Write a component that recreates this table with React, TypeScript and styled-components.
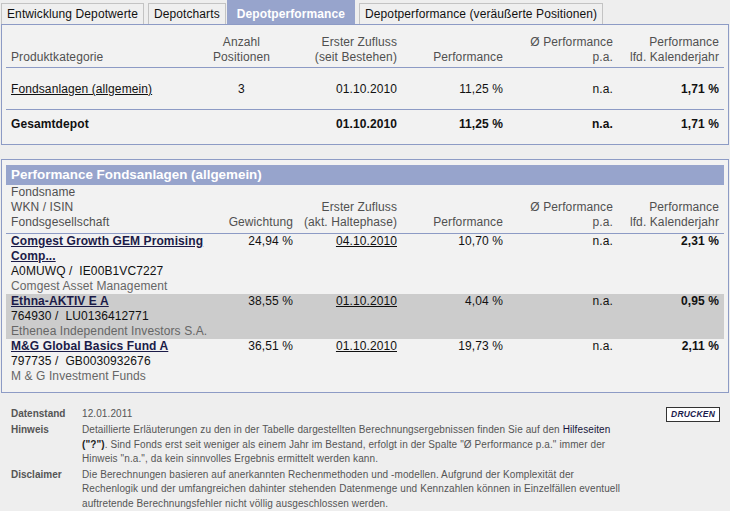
import React from 'react';
import styled, { createGlobalStyle } from 'styled-components';

const GlobalStyle = createGlobalStyle`
  html, body { margin: 0; padding: 0; background: #eeeeee; }
  body {
    font-family: "Liberation Sans", Arial, sans-serif;
    font-size: 12px;
    color: #111111;
  }
`;

const Page = styled.div`
  width: 730px;
  box-sizing: border-box;
  padding: 0 1px;
`;

const TabBar = styled.nav`
  display: flex;
  align-items: flex-end;
  height: 24px;
  gap: 4px;
`;

const Tab = styled.div<{ $active?: boolean }>`
  box-sizing: border-box;
  height: ${p => (p.$active ? 24 : 21)}px;
  padding: ${p => (p.$active ? '6px 9px 0' : '3px 5px 0')};
  margin-left: ${p => (p.$active ? '-3px' : '0')};
  border: 1px solid ${p => (p.$active ? '#97a4cc' : '#c3c3c3')};
  border-bottom: none;
  background: ${p => (p.$active ? '#97a4cc' : '#efefef')};
  color: ${p => (p.$active ? '#ffffff' : '#111111')};
  font-weight: ${p => (p.$active ? 'bold' : 'normal')};
  line-height: 15px;
  white-space: nowrap;
  letter-spacing: 0.1px;
`;

const Panel = styled.section`
  border: 1px solid #8d9bc5;
  background: #f2f2f2;
  padding: 0 4px;
`;

const SummaryPanel = styled(Panel)`
  padding-top: 10px;
  padding-bottom: 5px;
`;

const DetailPanel = styled(Panel)`
  margin-top: 14px;
  padding-top: 5px;
  padding-bottom: 8px;
`;

const TitleBar = styled.h2`
  margin: 0;
  height: 20px;
  line-height: 20px;
  padding: 0 5px;
  background: #97a4cc;
  color: #ffffff;
  font-size: 13.4px;
  font-weight: bold;
`;

const Row = styled.div<{ $cols: string; $pt?: number; $pb?: number; $line?: boolean; $shade?: boolean }>`
  display: grid;
  grid-template-columns: ${p => p.$cols};
  align-items: start;
  line-height: 15px;
  padding-top: ${p => p.$pt ?? 0}px;
  padding-bottom: ${p => p.$pb ?? 0}px;
  border-bottom: ${p => (p.$line ? '1px solid #8d9bc5' : 'none')};
  background: ${p => (p.$shade ? '#cccccc' : 'transparent')};
  letter-spacing: 0.1px;
`;

const HeadRow = styled(Row)`
  align-items: end;
  color: #505050;
`;

const Cell = styled.div<{ $align?: 'left' | 'center' | 'right'; $bold?: boolean }>`
  padding: 0 5px;
  text-align: ${p => p.$align ?? 'left'};
  font-weight: ${p => (p.$bold ? 'bold' : 'normal')};
  white-space: nowrap;
`;

const PlainLink = styled.a`
  color: #111111;
  text-decoration: underline;
`;

const FundLink = styled.a`
  color: #1b1b48;
  font-weight: bold;
  text-decoration: underline;
`;

const Ids = styled.div`
  color: #111111;
`;

const Company = styled.div`
  color: #666666;
`;

const InfoGrid = styled.div`
  display: grid;
  grid-template-columns: 71px 1fr 52px;
  row-gap: 1px;
  margin-top: 14px;
  padding: 0 9px 0 10px;
  font-size: 10px;
  line-height: 14.5px;
  color: #555555;
  letter-spacing: 0.1px;
`;

const InfoLabel = styled.div`
  font-size: 10px;
  font-weight: bold;
  letter-spacing: 0;
`;

const InfoText = styled.div<{ $span?: boolean }>`
  grid-column: ${p => (p.$span ? '2 / 4' : 'auto')};
`;

const HelpLink = styled.a`
  color: #15153a;
  font-weight: normal;
  text-decoration: none;
`;

const Strong = styled.b`
  color: #222222;
`;

const PrintButton = styled.button`
  justify-self: end;
  box-sizing: border-box;
  height: 15px;
  padding: 0 4px;
  border: 1px solid #333333;
  background: #ffffff;
  color: #1b1b4d;
  font-family: "Liberation Sans", Arial, sans-serif;
  font-size: 8.5px;
  font-weight: bold;
  font-style: italic;
  line-height: 13px;
  letter-spacing: 0.2px;
  cursor: pointer;
`;

const SUM_COLS = '200px 71px 125px 106px 110px 106px';
const DET_COLS = '214px 78px 104px 106px 110px 106px';

type Fund = {
  name: React.ReactNode;
  ids: string;
  company: string;
  weight: string;
  date: string;
  perf: string;
  pa: string;
  ytd: string;
  shade?: boolean;
};

const funds: Fund[] = [
  {
    name: (
      <>
        Comgest Growth GEM Promising
        <br />
        Comp...
      </>
    ),
    ids: 'A0MUWQ /\u00a0 IE00B1VC7227',
    company: 'Comgest Asset Management',
    weight: '24,94 %',
    date: '04.10.2010',
    perf: '10,70 %',
    pa: 'n.a.',
    ytd: '2,31 %',
  },
  {
    name: 'Ethna-AKTIV E A',
    ids: '764930 /\u00a0 LU0136412771',
    company: 'Ethenea Independent Investors S.A.',
    weight: '38,55 %',
    date: '01.10.2010',
    perf: '4,04 %',
    pa: 'n.a.',
    ytd: '0,95 %',
    shade: true,
  },
  {
    name: 'M&G Global Basics Fund A',
    ids: '797735 /\u00a0 GB0030932676',
    company: 'M & G Investment Funds',
    weight: '36,51 %',
    date: '01.10.2010',
    perf: '19,73 %',
    pa: 'n.a.',
    ytd: '2,11 %',
  },
];

export default function App() {
  return (
    <Page>
      <GlobalStyle />
      <TabBar>
        <Tab>Entwicklung Depotwerte</Tab>
        <Tab>Depotcharts</Tab>
        <Tab $active>Depotperformance</Tab>
        <Tab>Depotperformance (veräußerte Positionen)</Tab>
      </TabBar>

      <SummaryPanel>
        <HeadRow $cols={SUM_COLS} $pb={2} $line>
          <Cell>Produktkategorie</Cell>
          <Cell $align="center">
            Anzahl
            <br />
            Positionen
          </Cell>
          <Cell $align="right">
            Erster Zufluss
            <br />
            (seit Bestehen)
          </Cell>
          <Cell $align="right">Performance</Cell>
          <Cell $align="right">
            Ø Performance
            <br />
            p.a.
          </Cell>
          <Cell $align="right">
            Performance
            <br />
            lfd. Kalenderjahr
          </Cell>
        </HeadRow>
        <Row $cols={SUM_COLS} $pt={14} $pb={12} $line>
          <Cell>
            <PlainLink href="#">Fondsanlagen (allgemein)</PlainLink>
          </Cell>
          <Cell $align="center">3</Cell>
          <Cell $align="right">01.10.2010</Cell>
          <Cell $align="right">11,25 %</Cell>
          <Cell $align="right">n.a.</Cell>
          <Cell $align="right" $bold>
            1,71 %
          </Cell>
        </Row>
        <Row $cols={SUM_COLS} $pt={7} $pb={7}>
          <Cell $bold>Gesamtdepot</Cell>
          <Cell $align="center" />
          <Cell $align="right" $bold>
            01.10.2010
          </Cell>
          <Cell $align="right" $bold>
            11,25 %
          </Cell>
          <Cell $align="right" $bold>
            n.a.
          </Cell>
          <Cell $align="right" $bold>
            1,71 %
          </Cell>
        </Row>
      </SummaryPanel>

      <DetailPanel>
        <TitleBar>Performance Fondsanlagen (allgemein)</TitleBar>
        <HeadRow $cols={DET_COLS} $pb={3} $line>
          <Cell>
            Fondsname
            <br />
            WKN / ISIN
            <br />
            Fondsgesellschaft
          </Cell>
          <Cell $align="right">Gewichtung</Cell>
          <Cell $align="right">
            Erster Zufluss
            <br />
            (akt. Haltephase)
          </Cell>
          <Cell $align="right">Performance</Cell>
          <Cell $align="right">
            Ø Performance
            <br />
            p.a.
          </Cell>
          <Cell $align="right">
            Performance
            <br />
            lfd. Kalenderjahr
          </Cell>
        </HeadRow>
        {funds.map((f, i) => (
          <Row key={i} $cols={DET_COLS} $shade={f.shade}>
            <Cell>
              <FundLink href="#">{f.name}</FundLink>
              <Ids>{f.ids}</Ids>
              <Company>{f.company}</Company>
            </Cell>
            <Cell $align="right">{f.weight}</Cell>
            <Cell $align="right">
              <PlainLink href="#">{f.date}</PlainLink>
            </Cell>
            <Cell $align="right">{f.perf}</Cell>
            <Cell $align="right">{f.pa}</Cell>
            <Cell $align="right" $bold>
              {f.ytd}
            </Cell>
          </Row>
        ))}
      </DetailPanel>

      <InfoGrid>
        <InfoLabel>Datenstand</InfoLabel>
        <InfoText>12.01.2011</InfoText>
        <PrintButton type="button">DRUCKEN</PrintButton>

        <InfoLabel>Hinweis</InfoLabel>
        <InfoText $span>
          Detaillierte Erläuterungen zu den in der Tabelle dargestellten Berechnungsergebnissen finden Sie auf den{' '}
          <HelpLink href="#">Hilfeseiten</HelpLink>
          <br />
          <Strong>("?")</Strong>. Sind Fonds erst seit weniger als einem Jahr im Bestand, erfolgt in der Spalte "Ø
          Performance p.a." immer der
          <br />
          Hinweis "n.a.", da kein sinnvolles Ergebnis ermittelt werden kann.
        </InfoText>

        <InfoLabel>Disclaimer</InfoLabel>
        <InfoText $span>
          Die Berechnungen basieren auf anerkannten Rechenmethoden und -modellen. Aufgrund der Komplexität der
          <br />
          Rechenlogik und der umfangreichen dahinter stehenden Datenmenge und Kennzahlen können in Einzelfällen eventuell
          <br />
          auftretende Berechnungsfehler nicht völlig ausgeschlossen werden.
        </InfoText>
      </InfoGrid>
    </Page>
  );
}
